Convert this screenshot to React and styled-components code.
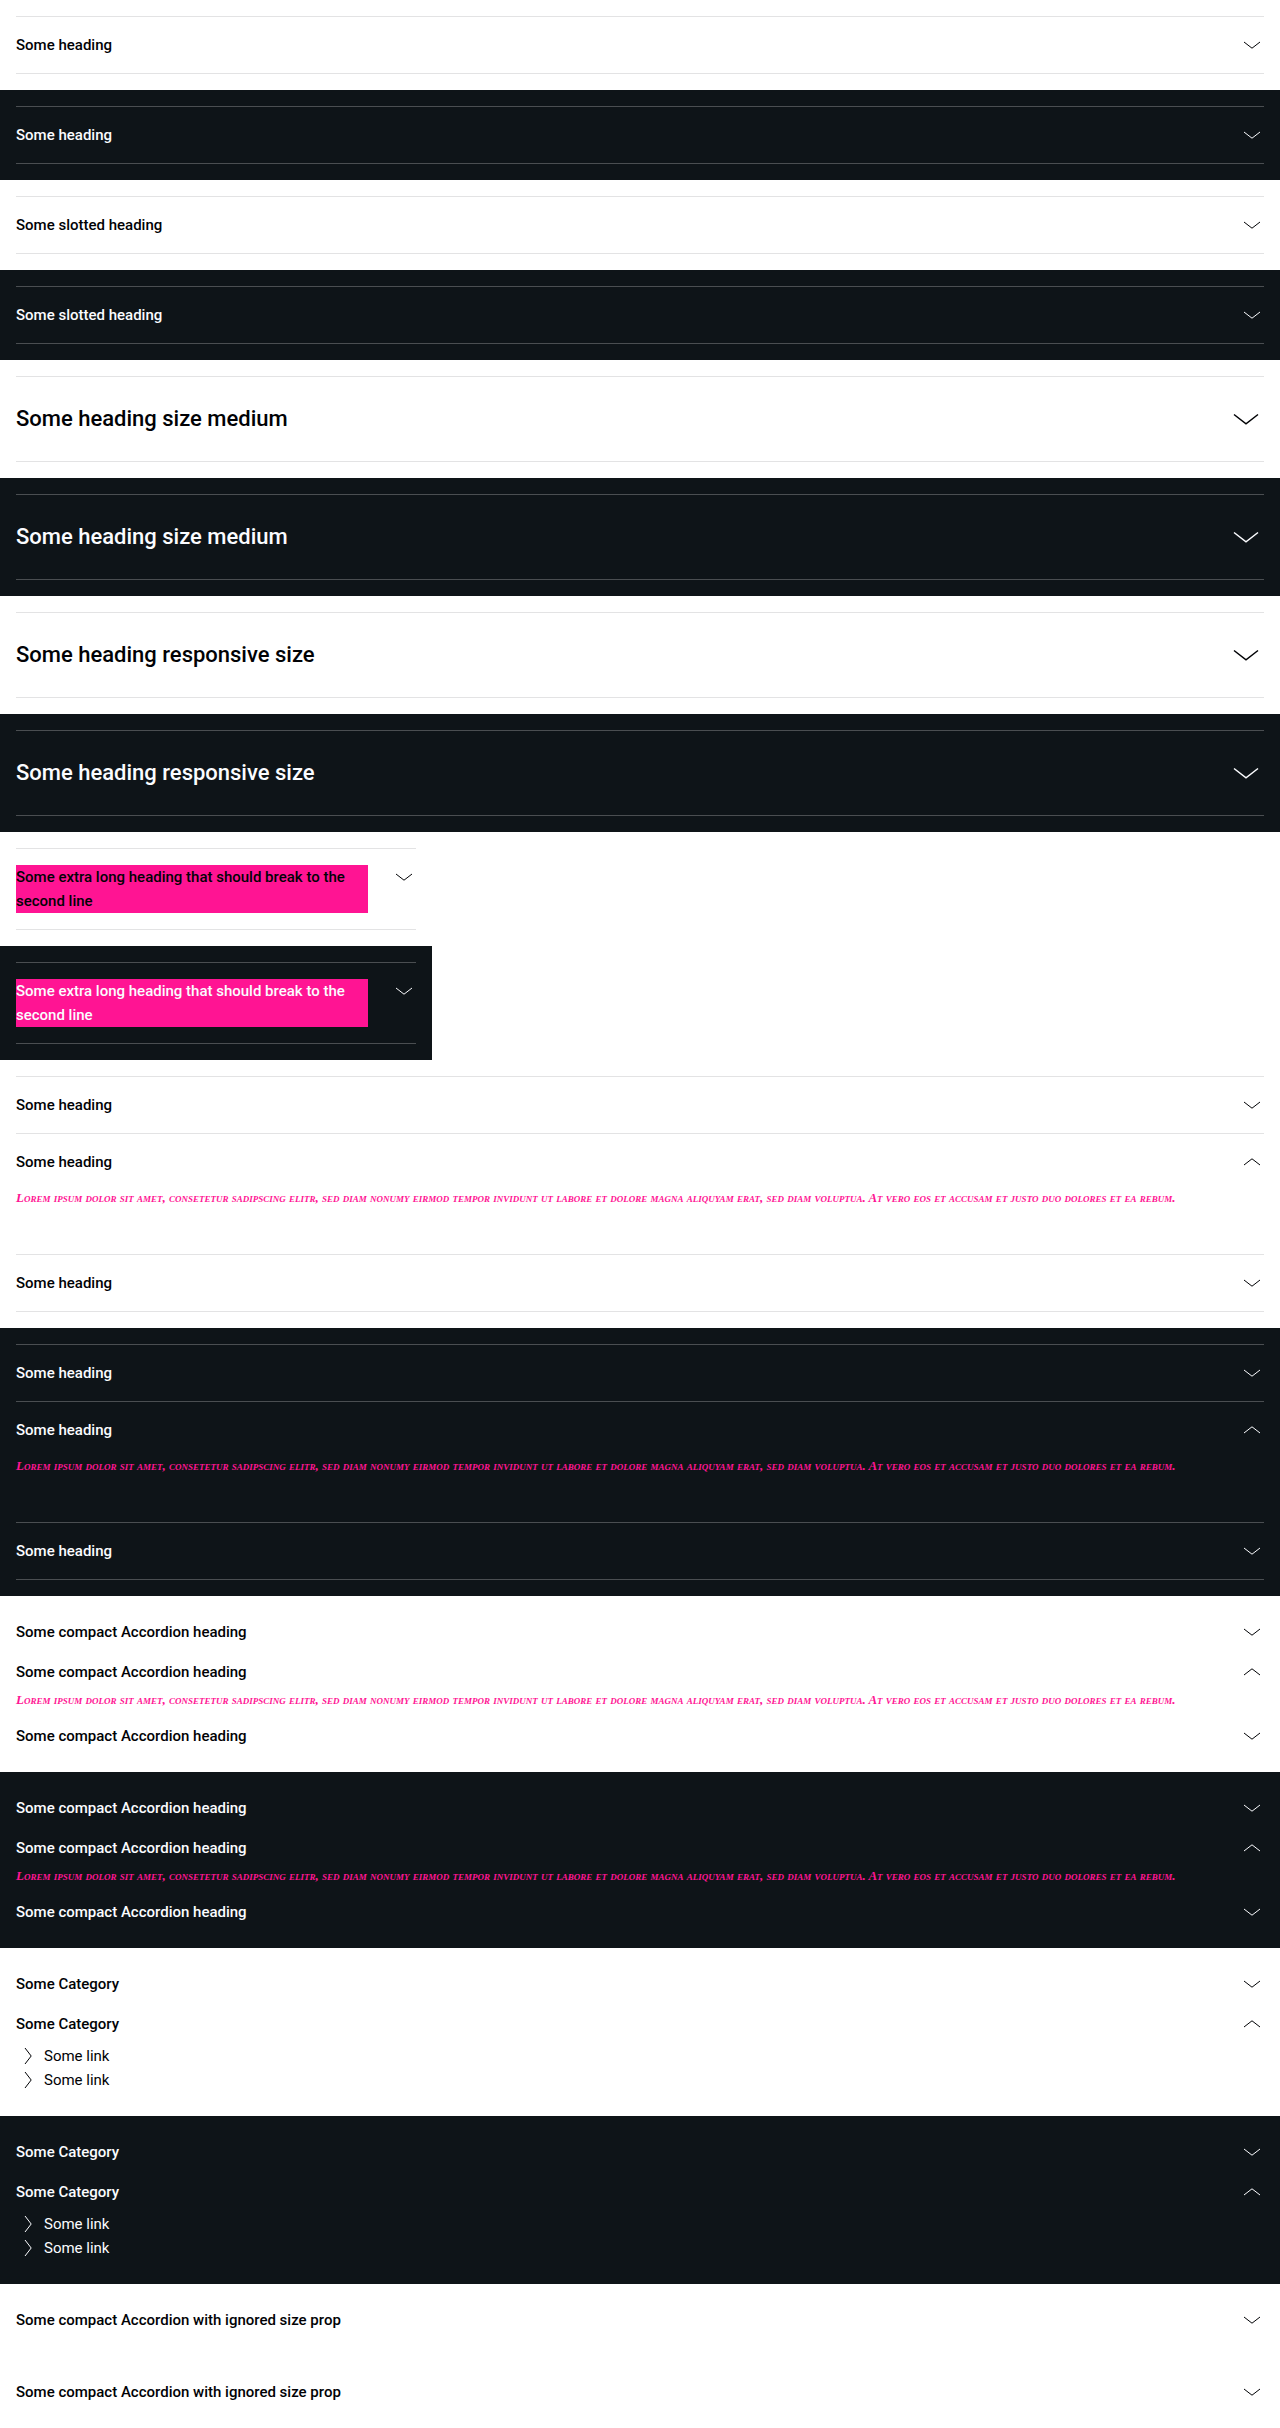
import React, { useState } from "react";
import styled, { createGlobalStyle, ThemeProvider } from "styled-components";

const light = { background: "#ffffff", text: "#010205", line: "#e3e3e4" };
const dark = { background: "#0e1418", text: "#fbfcff", line: "#4a4e51" };

const GlobalStyle = createGlobalStyle`
  *, *::before, *::after { box-sizing: border-box; }
  body { margin: 0; background: #ffffff; }
`;

const Page = styled.main`
  font-family: Roboto, "Liberation Sans", sans-serif;
  font-size: 15px;
  line-height: 24px;
`;

const Playground = styled.section`
  max-width: ${({ $narrow }) => ($narrow ? "432px" : "none")};
  padding: 16px;
  background: ${({ theme }) => theme.background};
  color: ${({ theme }) => theme.text};
`;

const Group = styled.div`
  border-bottom: ${({ theme, $compact }) => ($compact ? "0" : `1px solid ${theme.line}`)};
`;

const Item = styled.div`
  border-top: ${({ theme, $compact }) => ($compact ? "0" : `1px solid ${theme.line}`)};
`;

const Title = styled.h2`
  margin: 0;
  font: inherit;
`;

const Toggle = styled.button`
  display: flex;
  align-items: flex-start;
  justify-content: space-between;
  gap: 24px;
  width: 100%;
  margin: 0;
  padding: ${({ $compact, $size }) => ($compact ? "8px" : $size === "medium" ? "24px" : "16px")} 0;
  border: 0;
  background: none;
  color: inherit;
  font-family: inherit;
  font-weight: 500;
  font-size: ${({ $size }) => ($size === "medium" ? "22px" : "15px")};
  line-height: ${({ $size }) => ($size === "medium" ? "36px" : "24px")};
  text-align: left;
  cursor: pointer;
`;

const Label = styled.span`
  flex: 1;
  background: ${({ $marked }) => ($marked ? "deeppink" : "none")};
`;

const Icon = styled.svg`
  flex: none;
  width: ${({ $size }) => ($size === "medium" ? "36px" : "24px")};
  height: ${({ $size }) => ($size === "medium" ? "36px" : "24px")};
  fill: none;
  stroke: currentColor;
  stroke-width: 1;
  transform: ${({ $open }) => ($open ? "rotate(180deg)" : "none")};
`;

const Content = styled.div`
  padding-bottom: ${({ $compact }) => ($compact ? "8px" : "48px")};
`;

const Lorem = styled.p`
  margin: 0;
  color: deeppink;
  font: italic small-caps bold 13px/16px "Liberation Serif", serif;
`;

const LinkList = styled.ul`
  margin: 0;
  padding: 0;
  list-style: none;
`;

const Link = styled.a`
  display: flex;
  gap: 4px;
  width: fit-content;
  color: inherit;
  text-decoration: none;
`;

function Chevron({ size, open }) {
  return (
    <Icon viewBox="0 0 24 24" $size={size} $open={open} aria-hidden="true">
      <path d="M4 9l8 6.2L20 9" />
    </Icon>
  );
}

function ArrowRight() {
  return (
    <Icon viewBox="0 0 24 24" aria-hidden="true">
      <path d="M9 4l6.2 8L9 20" />
    </Icon>
  );
}

function Accordion({ heading, size = "small", compact, marked, defaultOpen = false, children }) {
  const [open, setOpen] = useState(defaultOpen);
  return (
    <Item $compact={compact}>
      <Title>
        <Toggle
          type="button"
          $size={size}
          $compact={compact}
          aria-expanded={open}
          onClick={() => setOpen(!open)}
        >
          <Label $marked={marked}>{heading}</Label>
          <Chevron size={size} open={open} />
        </Toggle>
      </Title>
      {open && children && <Content $compact={compact}>{children}</Content>}
    </Item>
  );
}

const lorem = (
  <Lorem>
    Lorem ipsum dolor sit amet, consetetur sadipscing elitr, sed diam nonumy eirmod tempor invidunt ut
    labore et dolore magna aliquyam erat, sed diam voluptua. At vero eos et accusam et justo duo dolores
    et ea rebum.
  </Lorem>
);

const links = (
  <LinkList>
    {[1, 2].map((id) => (
      <li key={id}>
        <Link href="#">
          <ArrowRight />
          Some link
        </Link>
      </li>
    ))}
  </LinkList>
);

const repeatHeading = (heading) => [{ heading }, { heading, defaultOpen: true, children: lorem }, { heading }];

const category = "Some Category";
const ignoredSize = "Some compact Accordion with ignored size prop";

const both = [light, dark];

const examples = [
  { themes: both, items: [{ heading: "Some heading" }] },
  { themes: both, items: [{ heading: "Some slotted heading" }] },
  { themes: both, items: [{ heading: "Some heading size medium", size: "medium" }] },
  { themes: both, items: [{ heading: "Some heading responsive size", size: "medium" }] },
  {
    themes: both,
    narrow: true,
    items: [{ heading: "Some extra long heading that should break to the second line", marked: true }],
  },
  { themes: both, items: repeatHeading("Some heading") },
  { themes: both, compact: true, items: repeatHeading("Some compact Accordion heading") },
  {
    themes: both,
    compact: true,
    items: [{ heading: category }, { heading: category, defaultOpen: true, children: links }],
  },
  { themes: [light], compact: true, items: [{ heading: ignoredSize }] },
  { themes: [light], compact: true, items: [{ heading: ignoredSize }] },
];

export default function App() {
  return (
    <Page>
      <GlobalStyle />
      {examples.map(({ themes, items, narrow, compact }, index) =>
        themes.map((theme) => (
          <ThemeProvider theme={theme} key={`${index}-${theme.background}`}>
            <Playground $narrow={narrow}>
              <Group $compact={compact}>
                {items.map((item, i) => (
                  <Accordion key={i} compact={compact} {...item} />
                ))}
              </Group>
            </Playground>
          </ThemeProvider>
        ))
      )}
    </Page>
  );
}
